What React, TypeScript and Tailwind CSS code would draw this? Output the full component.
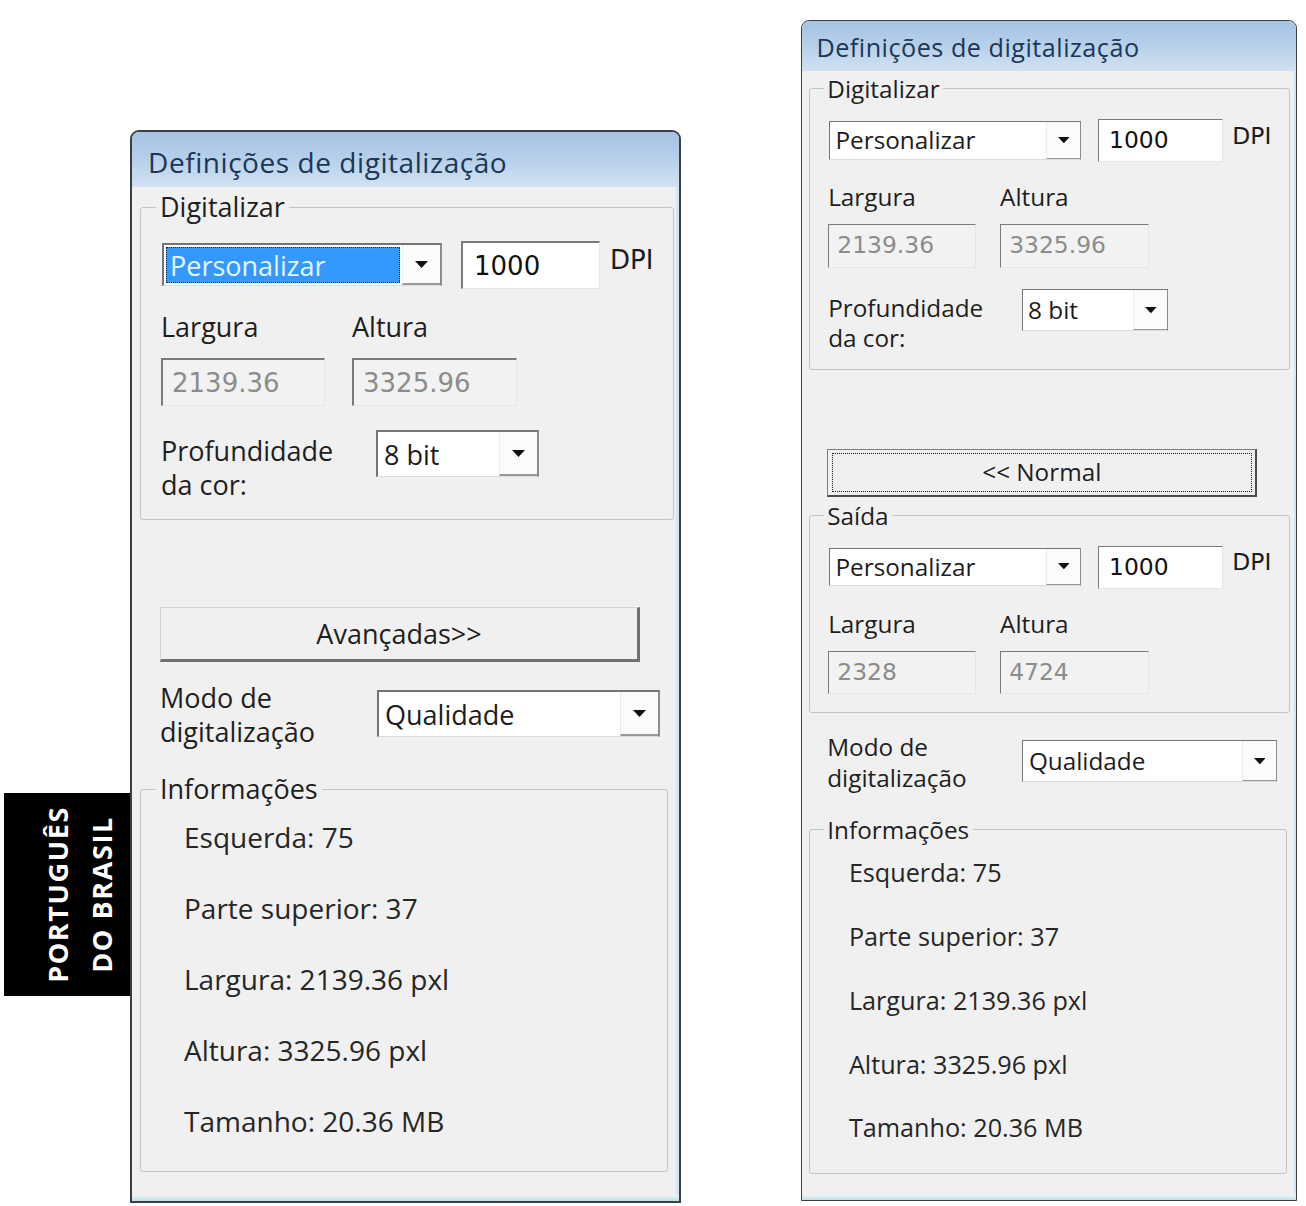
import React from "react";

const SANS = "font-['Open_Sans','Noto_Sans',sans-serif]";
const FIELD = "font-['DejaVu_Sans',sans-serif]";

function DownArrow() {
  return (
    <svg width="13" height="7" viewBox="0 0 13 7" aria-hidden="true">
      <path d="M0 0H13L6.5 7Z" fill="#111111" />
    </svg>
  );
}

type ComboProps = {
  value: string;
  w: string;
  h?: string;
  selected?: boolean;
};

function Combo({ value, w, h = "h-[47px]", selected = false }: ComboProps) {
  return (
    <div
      className={`flex ${h} ${w} border-t-2 border-l-2 border-r-2 border-b border-t-[#747474] border-l-[#747474] border-r-[#8c8c8c] border-b-[#dcdcdc] bg-white`}
    >
      <div className="flex min-w-0 flex-1 p-[2px]">
        <div
          className={`flex flex-1 items-center pl-[4px] ${
            selected
              ? "bg-[#3399ff] text-[#e8f6ff] outline-1 outline-dotted outline-[#0b2a4a] -outline-offset-1"
              : "text-[#1c1c1c]"
          }`}
        >
          <span className="text-[27px] leading-none">{value}</span>
        </div>
      </div>
      <div className="flex w-[38px] items-center justify-center border-l border-b-2 border-l-[#ececec] border-b-[#9a9a9a] bg-[#fbfbfb]">
        <DownArrow />
      </div>
    </div>
  );
}

type BoxProps = { value: string; w: string; disabled?: boolean };

function TextBox({ value, w, disabled = false }: BoxProps) {
  return (
    <div
      className={`flex h-[48px] ${w} items-center border-t-2 border-l-2 border-r border-b border-t-[#7a7a7a] border-l-[#7a7a7a] border-r-[#e6e6e6] border-b-[#e6e6e6] ${
        disabled ? "bg-[#f2f2f2] pl-[9px] text-[#8c8c8c]" : "bg-white pl-[11px] text-[#111111]"
      }`}
    >
      <span className={`${FIELD} text-[26px] leading-none`}>{value}</span>
    </div>
  );
}

function SizeFields({
  selected,
  width,
  height,
}: {
  selected: boolean;
  width: string;
  height: string;
}) {
  return (
    <>
      <div className="mt-[19px] flex items-start">
        <div className="ml-[1px] mt-[2px]">
          <Combo value="Personalizar" w="w-[280px]" h="h-[43px]" selected={selected} />
        </div>
        <div className="ml-[19px]">
          <TextBox value="1000" w="w-[139px]" />
        </div>
        <span className={`${FIELD} ml-[10px] pt-[4px] text-[26px] leading-[30px] text-[#1c1c1c]`}>DPI</span>
      </div>
      <div className="mt-[23px] grid grid-cols-[164px_165px] gap-x-[27px] text-[27px] leading-[30px]">
        <span>Largura</span>
        <span>Altura</span>
      </div>
      <div className="mt-[16px] grid grid-cols-[164px_165px] gap-x-[27px]">
        <TextBox value={width} w="w-[164px]" disabled />
        <TextBox value={height} w="w-[165px]" disabled />
      </div>
    </>
  );
}

function Legend({ children }: { children: React.ReactNode }) {
  return <legend className="ml-[15px] px-[4px] text-[27px] leading-[30px]">{children}</legend>;
}

function Panel({ advanced = false }: { advanced?: boolean }) {
  return (
    <div
      className={`${SANS} flex w-[551px] flex-col overflow-hidden rounded-t-[9px] border-2 border-[#3a3f45] bg-[#f0f0f0] text-[#1e1e1e]`}
    >
      <div className="flex h-[55px] shrink-0 items-center bg-gradient-to-b from-[#a6c3e4] via-[#b7d0ea] to-[#d2e2f2] pl-[16px] pt-[5px]">
        <span className="text-[28px] leading-none tracking-[0.02em] text-[#1b3656]">
          Definições de digitalização
        </span>
      </div>

      <div className="flex flex-col border-r-[3px] border-r-[#d3e5f3] px-[8px] pb-[23px] pt-[5px]">
        <fieldset className="rounded-[3px] border border-[#c3c3c3]">
          <Legend>Digitalizar</Legend>
          <div className="px-[20px] pb-[17px]">
            <SizeFields selected={!advanced} width="2139.36" height="3325.96" />
            <div className="mt-[24px] flex items-start">
              <div className="mt-[4px] w-[215px] text-[27px] leading-[34px]">
                Profundidade
                <br />
                da cor:
              </div>
              <Combo value="8 bit" w="w-[163px]" />
            </div>
          </div>
        </fieldset>

        {advanced ? (
          <>
            <button
              type="button"
              className="ml-[20px] mt-[87px] flex h-[54px] w-[478px] border border-r-[3px] border-b-[3px] border-t-[#7d7d7d] border-l-[#7d7d7d] border-r-[#4b4b4b] border-b-[#4b4b4b] bg-[#f0f0f0] p-[4px]"
            >
              <span className="flex flex-1 items-center justify-center border border-dotted border-[#1e1e1e] text-[27px] leading-none">
                &lt;&lt; Normal
              </span>
            </button>
            <fieldset className="mt-[5px] rounded-[3px] border border-[#c3c3c3]">
              <Legend>Saída</Legend>
              <div className="px-[20px] pb-[20px]">
                <SizeFields selected={false} width="2328" height="4724" />
              </div>
            </fieldset>
          </>
        ) : (
          <button
            type="button"
            className="ml-[20px] mt-[87px] flex h-[55px] w-[480px] items-center justify-center border-t border-l border-r-[3px] border-b-[3px] border-t-[#d4d4d4] border-l-[#d4d4d4] border-r-[#707070] border-b-[#707070] bg-[#f0f0f0] text-[27px] leading-none"
          >
            Avançadas&gt;&gt;
          </button>
        )}

        <div className={`${advanced ? "mt-[21px]" : "mt-[19px]"} flex items-start pl-[20px]`}>
          <div className="w-[217px] text-[27px] leading-[34px]">
            Modo de
            <br />
            digitalização
          </div>
          <div className="mt-[9px]">
            <Combo value="Qualidade" w="w-[283px]" />
          </div>
        </div>

        <fieldset className="mt-[25px] rounded-[3px] border border-[#c3c3c3]">
          <Legend>Informações</Legend>
          <ul className="flex flex-col gap-[41px] pb-[35px] pl-[43px] pt-[18px] text-[28px] leading-[30px] text-[#262626]">
            <li>Esquerda: 75</li>
            <li>Parte superior: 37</li>
            <li>Largura: 2139.36 pxl</li>
            <li>Altura: 3325.96 pxl</li>
            <li>Tamanho: 20.36 MB</li>
          </ul>
        </fieldset>
      </div>

      <div className="h-[6px] bg-gradient-to-b from-[#eef3f6] to-[#bfdfe6]" />
    </div>
  );
}

export default function App() {
  return (
    <div className="flex min-h-[1206px] w-[1306px] items-start bg-white">
      <div className="ml-[4px] mt-[793px] flex h-[203px] w-[126px] shrink-0 items-center justify-center bg-black">
        <div className="ml-[26px] rotate-180 text-center font-['Open_Sans',sans-serif] text-[27px] font-bold leading-[44px] tracking-[0.06em] text-white [writing-mode:vertical-rl]">
          PORTUGUÊS
          <br />
          DO BRASIL
        </div>
      </div>

      <div className="mt-[130px] shrink-0">
        <Panel />
      </div>

      <div className="ml-[120px] mt-[20px] shrink-0">
        <div className="[zoom:0.9]">
          <Panel advanced />
        </div>
      </div>
    </div>
  );
}
